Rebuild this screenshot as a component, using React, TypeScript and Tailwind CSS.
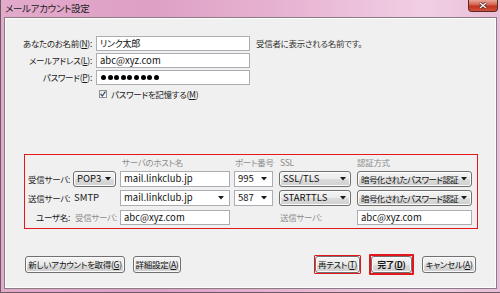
import React from "react"

const jp = "font-['Noto_Sans_CJK_JP',sans-serif] [font-feature-settings:'palt']"
const latin = "text-[9.5px] tracking-[0px]"
const tight = "tracking-[-0.6px]"

function Arrow() {
  return (
    <svg width="6" height="4" viewBox="0 0 6 4" className="shrink-0">
      <polygon points="0,0 6,0 3,3.5" fill="#1a1a1a" />
    </svg>
  )
}

// Win7 style drop-down button
function DropButton({ value, className = "", textClass = "" }: { value: string; className?: string; textClass?: string }) {
  return (
    <div
      className={`shrink-0 flex items-center justify-between h-full pl-[3px] pr-[4px] rounded-[3px] border border-[#707070] bg-[linear-gradient(#f4f4f4,#ebebeb_50%,#dcdcdc_51%,#cfcfcf)] shadow-[inset_0_0_0_1px_#fcfcfc] text-[#111] ${className}`}
    >
      <span className={textClass}>{value}</span>
      <Arrow />
    </div>
  )
}

// editable combo box (white field + arrow)
function Combo({ value, className = "" }: { value: string; className?: string }) {
  return (
    <div
      className={`shrink-0 flex items-center justify-between h-full pl-[3px] pr-[5px] border border-[#abadb3] bg-white text-[#111] ${className}`}
    >
      <span className={latin}>{value}</span>
      <Arrow />
    </div>
  )
}

function Field({ value, className = "", textClass = latin }: { value?: string; className?: string; textClass?: string }) {
  return (
    <div className={`shrink-0 flex items-center h-full pl-[3px] border border-[#abadb3] bg-white text-[#111] ${className}`}>
      <span className={textClass}>{value}</span>
    </div>
  )
}

function Btn({ children, className = "" }: { children: React.ReactNode; className?: string }) {
  return (
    <div
      className={`shrink-0 flex items-center justify-center h-[17px] rounded-[3px] border border-[#707070] bg-[linear-gradient(#f4f4f4,#ebebeb_50%,#dddddd_51%,#d0d0d0)] shadow-[inset_0_0_0_1px_#fbfbfb] text-[#111] ${className}`}
    >
      {children}
    </div>
  )
}

export default function App() {
  return (
    <div className={`w-[500px] h-[293px] flex flex-col border-l border-b border-[#6a5a64] bg-[linear-gradient(90deg,#e3aacb,#dea0c5_30%,#e8b6d4_60%,#f1cfe3_85%,#e9bdd7)] text-[8.5px] tracking-[-0.3px] leading-none whitespace-nowrap ${jp}`}>
      {/* title bar */}
      <div className="h-[17px] flex items-start justify-between">
        <span className="pl-[4px] pt-[4px] text-[9.5px] text-[#222]">メールアカウント設定</span>
        <div className="mr-[2px] w-[30px] h-[12px] flex items-center justify-center rounded-b-[4px] border border-t-0 border-[#5a2a22] bg-[linear-gradient(#e8a598,#d4614e_45%,#c0321f_55%,#d2503a)]">
          <svg width="8" height="7" viewBox="0 0 8 7">
            <path d="M1 1 L7 6 M7 1 L1 6" stroke="#3a1010" strokeWidth="2.6" />
            <path d="M1 1 L7 6 M7 1 L1 6" stroke="#fff" strokeWidth="1.4" />
          </svg>
        </div>
      </div>

      {/* content */}
      <div className="mx-[3px] mb-[3px] flex-1 flex flex-col border border-[#8a7c85] bg-[#f0f0f0] shadow-[inset_0_0_0_1px_#fdfdfd]">
        <div className="pt-[18px] flex flex-col gap-[2px]">
          <div className="flex items-center h-[15px]">
            <span className="w-[87px] text-right text-[#1a1a1a]">あなたのお名前(<u>N</u>):</span>
            <Field value="リンク太郎" textClass="text-[9px]" className="ml-[4px] w-[154px]" />
            <span className="ml-[6px] text-[#333]">受信者に表示される名前です。</span>
          </div>
          <div className="flex items-center h-[15px]">
            <span className="w-[87px] text-right text-[#1a1a1a]">メールアドレス(<u>L</u>):</span>
            <Field value="abc@xyz.com" className="ml-[4px] w-[154px]" />
          </div>
          <div className="flex items-center h-[15px]">
            <span className="w-[87px] text-right text-[#1a1a1a]">パスワード(<u>P</u>):</span>
            <div className="ml-[4px] w-[154px] h-full flex items-center gap-[1.6px] pl-[4px] border border-[#abadb3] bg-white">
              {Array.from({ length: 9 }).map((_, i) => (
                <span key={i} className="w-[5px] h-[5px] rounded-full bg-black" />
              ))}
            </div>
          </div>
          <div className="flex items-center h-[10px] mt-[2px] pl-[94px]">
            <div className="w-[8px] h-[8px] border border-[#8e8f8f] bg-[linear-gradient(#e6e6e6,#fdfdfd)] flex items-center justify-center">
              <svg width="6" height="6" viewBox="0 0 6 6">
                <path d="M0.6 3 L2.3 5 L5.4 0.6" fill="none" stroke="#3c4a6a" strokeWidth="1.2" />
              </svg>
            </div>
            <span className="ml-[4px] text-[#1a1a1a]">パスワードを記憶する(<u>M</u>)</span>
          </div>
        </div>

        {/* server settings */}
        <div className="mt-[55px] ml-[19px] w-[454px] h-[75px] border border-[#e4171c] flex flex-col">
          <div className="mt-[2px] h-[11px] flex items-center text-[#8c8c8c]">
            <span className="shrink-0 w-[46px]" />
            <span className="shrink-0 ml-[2px] w-[43px]" />
            <span className="shrink-0 ml-[4px] w-[110px] pl-[2px]">サーバのホスト名</span>
            <span className="shrink-0 ml-[4px] w-[39px] pl-[1px]">ポート番号</span>
            <span className="shrink-0 ml-[6px] w-[72px] pl-[1px]">SSL</span>
            <span className="shrink-0 ml-[6px] w-[115px]">認証方式</span>
          </div>
          <div className="mt-[3px] h-[16px] flex items-center">
            <span className="shrink-0 w-[46px] text-right pr-[1px] text-[#1a1a1a]">受信サーバ:</span>
            <DropButton value="POP3" textClass={latin} className="ml-[2px] w-[43px]" />
            <Field value="mail.linkclub.jp" className="ml-[4px] w-[110px]" />
            <Combo value="995" className="ml-[4px] w-[39px]" />
            <DropButton value="SSL/TLS" textClass={latin} className="ml-[6px] w-[72px]" />
            <DropButton value="暗号化されたパスワード認証" textClass={tight} className="ml-[6px] w-[115px]" />
          </div>
          <div className="mt-[3px] h-[16px] flex items-center">
            <span className="shrink-0 w-[46px] text-right pr-[1px] text-[#1a1a1a]">送信サーバ:</span>
            <span className={`shrink-0 ml-[2px] w-[43px] pl-[1px] text-[#1a1a1a] ${latin}`}>SMTP</span>
            <Combo value="mail.linkclub.jp" className="ml-[4px] w-[110px]" />
            <Combo value="587" className="ml-[4px] w-[39px]" />
            <DropButton value="STARTTLS" textClass={latin} className="ml-[6px] w-[72px]" />
            <DropButton value="暗号化されたパスワード認証" textClass={tight} className="ml-[6px] w-[115px]" />
          </div>
          <div className="mt-[4px] h-[15px] flex items-center">
            <span className="shrink-0 w-[46px] text-right pr-[1px] text-[#1a1a1a]">ユーザ名:</span>
            <span className="shrink-0 ml-[2px] w-[43px] pl-[2px] text-[#8c8c8c]">受信サーバ:</span>
            <Field value="abc@xyz.com" className="ml-[4px] w-[110px]" />
            <span className="shrink-0 ml-[4px] w-[39px]" />
            <span className="shrink-0 ml-[6px] w-[72px] pl-[1px] text-[#8c8c8c]">送信サーバ:</span>
            <Field value="abc@xyz.com" className="ml-[6px] w-[115px] border-[#7eb4ea]" />
          </div>
        </div>

        {/* buttons */}
        <div className="mt-[25px] flex items-center pl-[20px] pr-[20px]">
          <Btn className="w-[100px]">新しいアカウントを取得(<u>G</u>)</Btn>
          <Btn className="ml-[8px] w-[48px]">詳細設定(<u>A</u>)</Btn>
          <div className="ml-auto border border-[#e4171c] rounded-[1px]">
            <Btn className="w-[45px]">再テスト(<u>T</u>)</Btn>
          </div>
          <div className="ml-[8px] border-2 border-[#e4171c] rounded-[1px]">
            <Btn className="w-[41px] font-bold">完了(<u>D</u>)</Btn>
          </div>
          <Btn className="ml-[8px] w-[54px]">キャンセル(<u>A</u>)</Btn>
        </div>
      </div>
    </div>
  )
}
